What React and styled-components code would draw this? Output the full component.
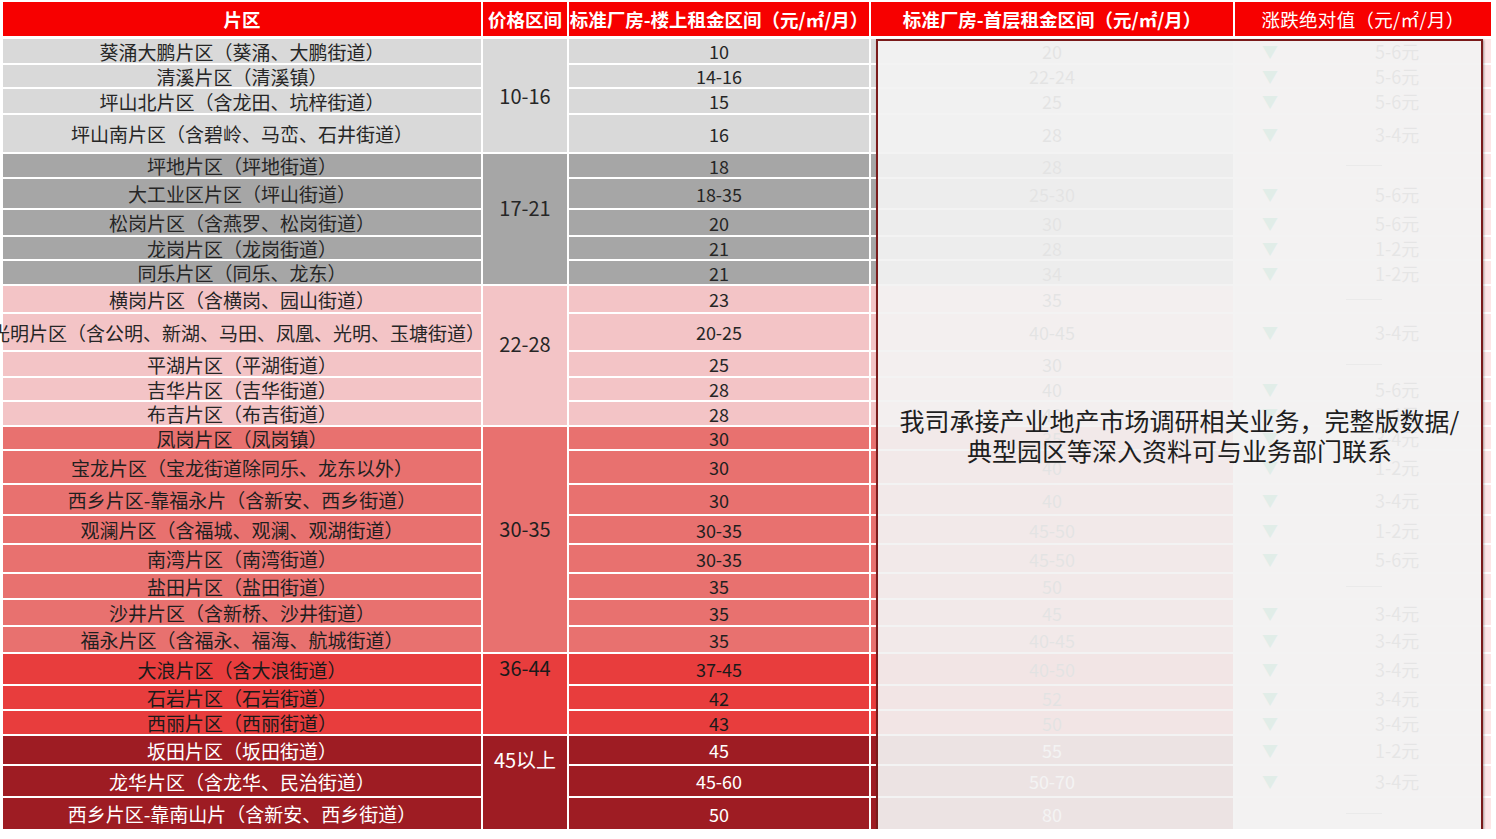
import React from 'react'
import styled, { createGlobalStyle } from 'styled-components'

const GlobalStyle = createGlobalStyle`
    html, body {
        margin: 0;
        padding: 0;
        background: #ffffff;
    }
    body {
        font-family: "Noto Sans CJK SC", "Noto Sans", sans-serif;
    }
`

const COLUMNS = '478px 84px 300px 362px 256px'

const groups = [
    { price: '10-16', bg: '#d9d9d9', color: '#262626', lift: 0, rows: [
        ['葵涌大鹏片区（葵涌、大鹏街道）', '10', '20', 'down', '5-6元', 24],
        ['清溪片区（清溪镇）', '14-16', '22-24', 'down', '5-6元', 22],
        ['坪山北片区（含龙田、坑梓街道）', '15', '25', 'down', '5-6元', 24],
        ['坪山南片区（含碧岭、马峦、石井街道）', '16', '28', 'down', '3-4元', 37],
    ]},
    { price: '17-21', bg: '#a6a6a6', color: '#262626', lift: 22, rows: [
        ['坪地片区（坪地街道）', '18', '28', 'flat', '', 23],
        ['大工业区片区（坪山街道）', '18-35', '25-30', 'down', '5-6元', 29],
        ['松岗片区（含燕罗、松岗街道）', '20', '30', 'down', '5-6元', 25],
        ['龙岗片区（龙岗街道）', '21', '28', 'down', '1-2元', 22],
        ['同乐片区（同乐、龙东）', '21', '34', 'down', '1-2元', 23],
    ]},
    { price: '22-28', bg: '#f3c4c6', color: '#262626', lift: 24, rows: [
        ['横岗片区（含横岗、园山街道）', '23', '35', 'flat', '', 26],
        ['光明片区（含公明、新湖、马田、凤凰、光明、玉塘街道）', '20-25', '40-45', 'down', '3-4元', 36],
        ['平湖片区（平湖街道）', '25', '30', 'flat', '', 24],
        ['吉华片区（吉华街道）', '28', '40', 'down', '5-6元', 22],
        ['布吉片区（布吉街道）', '28', '40', 'down', '3-4元', 23],
    ]},
    { price: '30-35', bg: '#e8716f', color: '#1f1f1f', lift: 22, rows: [
        ['凤岗片区（凤岗镇）', '30', '35', 'down', '3-4元', 22],
        ['宝龙片区（宝龙街道除同乐、龙东以外）', '30', '40', 'down', '1-2元', 32],
        ['西乡片区-靠福永片（含新安、西乡街道）', '30', '40', 'down', '3-4元', 29],
        ['观澜片区（含福城、观澜、观湖街道）', '30-35', '45-50', 'down', '1-2元', 27],
        ['南湾片区（南湾街道）', '30-35', '45-50', 'down', '5-6元', 27],
        ['盐田片区（盐田街道）', '35', '50', 'flat', '', 24],
        ['沙井片区（含新桥、沙井街道）', '35', '45', 'down', '3-4元', 25],
        ['福永片区（含福永、福海、航城街道）', '35', '40-45', 'down', '3-4元', 25],
    ]},
    { price: '36-44', bg: '#e83d3d', color: '#1a1a1a', lift: 52, rows: [
        ['大浪片区（含大浪街道）', '37-45', '40-50', 'down', '3-4元', 30],
        ['石岩片区（石岩街道）', '42', '52', 'down', '3-4元', 23],
        ['西丽片区（西丽街道）', '43', '50', 'down', '3-4元', 23],
    ]},
    { price: '45以上', bg: '#9e1c23', color: '#ffffff', lift: 46, rows: [
        ['坂田片区（坂田街道）', '45', '55', 'down', '1-2元', 28],
        ['龙华片区（含龙华、民治街道）', '45-60', '50-70', 'down', '3-4元', 30],
        ['西乡片区-靠南山片（含新安、西乡街道）', '50', '80', 'flat', '', 31],
    ]},
]

const allRows = groups.flatMap(g => g.rows)

function App() {
    return (
        <>
        <GlobalStyle />
        <Page>
            <Header>
                <HeadCell>片区</HeadCell>
                <HeadCell>价格区间</HeadCell>
                <HeadCell>标准厂房-楼上租金区间（元/㎡/月）</HeadCell>
                <HeadCell>标准厂房-首层租金区间（元/㎡/月）</HeadCell>
                <HeadCell $light>涨跌绝对值（元/㎡/月）</HeadCell>
            </Header>
            <Body style={{ gridTemplateRows: allRows.map(r => r[5] + 'px').join(' ') }}>
                {groups.map(g => g.rows.map((r, i) => (
                    <React.Fragment key={r[0]}>
                        <NameCell $bg={g.bg} $color={g.color} $wide={r[0].length > 24}>{r[0]}</NameCell>
                        {i === 0 && (
                            <PriceCell $bg={g.bg} $color={g.color} $span={g.rows.length} $lift={g.lift}>
                                {g.price}
                            </PriceCell>
                        )}
                        <ValueCell $col={3} $bg={g.bg} $color={g.color}>{r[1]}</ValueCell>
                        <ValueCell $col={4} $bg={g.bg} $color={g.color}>{r[2]}</ValueCell>
                        <ChangeCell>
                            {r[3] === 'down' ? (
                                <>
                                <Arrow>▼</Arrow>
                                <Amount>{r[4]}</Amount>
                                </>
                            ) : (
                                <Dash />
                            )}
                        </ChangeCell>
                    </React.Fragment>
                )))}
            </Body>
            <Notice>
                <NoticeText>
                    我司承接产业地产市场调研相关业务，完整版数据/<br />
                    典型园区等深入资料可与业务部门联系
                </NoticeText>
            </Notice>
        </Page>
        </>
    )
}

export default App

const Page = styled.div`
    position: relative;
    width: 1490px;
    padding: 2px 0 0 3px;
`

const Header = styled.div`
    display: grid;
    grid-template-columns: ${COLUMNS};
    grid-template-rows: 34px;
    column-gap: 2px;
    margin-bottom: 3px;
`

const HeadCell = styled.div`
    display: flex;
    align-items: center;
    justify-content: center;
    background: #f70000;
    color: #ffffff;
    font-size: 18.5px;
    font-weight: ${p => (p.$light ? 400 : 700)};
    white-space: nowrap;
    letter-spacing: ${p => (p.$light ? '0.3px' : '0')};
`

const Body = styled.div`
    display: grid;
    grid-template-columns: ${COLUMNS};
    gap: 2px;
`

const Cell = styled.div`
    display: flex;
    align-items: center;
    justify-content: center;
    background: ${p => p.$bg};
    color: ${p => p.$color};
    font-size: 18px;
    white-space: nowrap;
    line-height: 1;
`

const NameCell = styled(Cell)`
    grid-column: 1;
    overflow: visible;
    font-size: 19px;
    padding-right: ${p => (p.$wide ? '8px' : '0')};
`

const PriceCell = styled(Cell)`
    grid-column: 2;
    grid-row: span ${p => p.$span};
    padding-bottom: ${p => p.$lift}px;
    font-size: 20px;
`

const ValueCell = styled(Cell)`
    grid-column: ${p => p.$col};
`

const ChangeCell = styled.div`
    grid-column: 5;
    display: flex;
    align-items: center;
    background: #fde6e7;
    font-size: 18px;
    color: #404040;
`

const Arrow = styled.span`
    width: 70px;
    text-align: center;
    color: #00a86b;
    font-size: 16px;
`

const Amount = styled.span`
    margin-left: 70px;
`

const Dash = styled.span`
    margin-left: 111px;
    width: 36px;
    border-top: 1px solid #7f7f7f;
`

const Notice = styled.div`
    position: absolute;
    left: 876px;
    top: 39px;
    width: 603px;
    height: 788px;
    border: 2px solid #7a1b1b;
    background: rgba(242, 242, 242, 0.93);
    box-shadow: 1px 1px 2px rgba(0, 0, 0, 0.35);
    display: flex;
    align-items: center;
    justify-content: center;
`

const NoticeText = styled.p`
    margin: 0;
    text-align: center;
    font-size: 25px;
    line-height: 30px;
    color: #1e1e1e;
`
